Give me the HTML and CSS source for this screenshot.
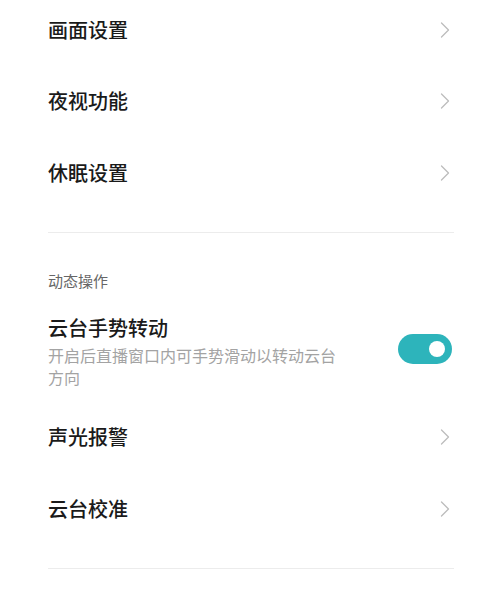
FILE: index.html
```html
<!DOCTYPE html>
<html lang="zh-CN">
<head>
<meta charset="utf-8">
<title>设置</title>
<link rel="stylesheet" href="styles.css">
</head>
<body>
<div class="page">
  <div class="list list-top">
    <div class="row">
      <span class="title">画面设置</span>
      <svg class="chev" width="10" height="16" viewBox="0 0 10 16"><polyline points="1.5,1 8.5,8 1.5,15" /></svg>
    </div>
    <div class="row">
      <span class="title">夜视功能</span>
      <svg class="chev" width="10" height="16" viewBox="0 0 10 16"><polyline points="1.5,1 8.5,8 1.5,15" /></svg>
    </div>
    <div class="row">
      <span class="title">休眠设置</span>
      <svg class="chev" width="10" height="16" viewBox="0 0 10 16"><polyline points="1.5,1 8.5,8 1.5,15" /></svg>
    </div>
  </div>
  <div class="divider"></div>
  <div class="section-head">动态操作</div>
  <div class="toggle-row">
    <div class="toggle-text">
      <div class="title">云台手势转动</div>
      <div class="sub">开启后直播窗口内可手势滑动以转动云台方向</div>
    </div>
    <div class="switch on"><span class="knob"></span></div>
  </div>
  <div class="list">
    <div class="row">
      <span class="title">声光报警</span>
      <svg class="chev" width="10" height="16" viewBox="0 0 10 16"><polyline points="1.5,1 8.5,8 1.5,15" /></svg>
    </div>
    <div class="row">
      <span class="title">云台校准</span>
      <svg class="chev" width="10" height="16" viewBox="0 0 10 16"><polyline points="1.5,1 8.5,8 1.5,15" /></svg>
    </div>
  </div>
  <div class="divider"></div>
</div>
</body>
</html>
```

FILE: styles.css
```css
html, body {
  margin: 0;
  padding: 0;
  background: #ffffff;
}

body {
  font-family: "Noto Sans CJK SC", "Noto Sans", sans-serif;
  color: #1a1a1a;
  overflow: hidden;
}

.page {
  padding: 0 46px 0 48px;
}

.list-top {
  margin-top: -6px;
}

.row {
  display: flex;
  align-items: center;
  justify-content: space-between;
  height: 71.5px;
}

.title {
  font-size: 20px;
  line-height: 28px;
  font-weight: 500;
  color: #1a1a1a;
}

.chev {
  margin-right: 4px;
  display: block;
}

.chev polyline {
  fill: none;
  stroke: #bdbdbd;
  stroke-width: 1.3;
  stroke-linecap: round;
  stroke-linejoin: round;
}

.divider {
  height: 1px;
  background: #ececec;
  margin-top: 23px;
}

.section-head {
  font-size: 15px;
  line-height: 20px;
  color: #666666;
  margin-top: 38px;
}

.toggle-row {
  display: flex;
  align-items: center;
  justify-content: space-between;
  margin-top: 23px;
  margin-bottom: 14px;
}

.toggle-text {
  max-width: 300px;
}

.sub {
  font-size: 16px;
  line-height: 22px;
  color: #a3a3a3;
  margin-top: 2px;
}

.switch {
  width: 54px;
  height: 30px;
  border-radius: 15px;
  background: #2db4bb;
  display: flex;
  align-items: center;
  justify-content: flex-end;
  padding-right: 7px;
  box-sizing: border-box;
  margin-right: 2px;
  margin-bottom: 4px;
}

.knob {
  width: 16px;
  height: 16px;
  border-radius: 50%;
  background: #ffffff;
}
```
